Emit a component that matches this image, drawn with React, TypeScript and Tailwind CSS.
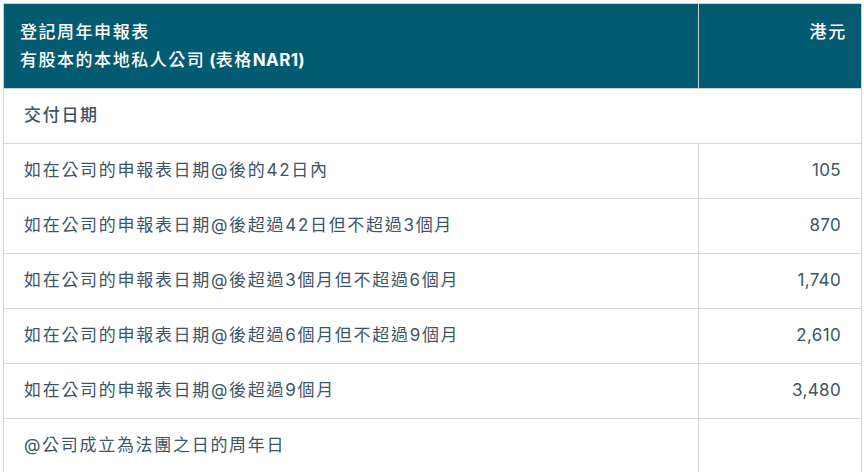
// Annual return fee table (NAR1)
const rows = [
    { label: '如在公司的申報表日期@後的42日內', fee: '105' },
    { label: '如在公司的申報表日期@後超過42日但不超過3個月', fee: '870' },
    { label: '如在公司的申報表日期@後超過3個月但不超過6個月', fee: '1,740' },
    { label: '如在公司的申報表日期@後超過6個月但不超過9個月', fee: '2,610' },
    { label: '如在公司的申報表日期@後超過9個月', fee: '3,480' },
];

const font = { fontFamily: 'Inter, "Noto Sans CJK TC", sans-serif' };

export default function App() {
    return (
        <div className="bg-white px-[3px] pt-[3px]" style={font}>
            <table className="w-[858px] table-fixed border-collapse text-[17px] tracking-[0.1em] text-[#3d5566]">
                <colgroup>
                    <col className="w-[695px]" />
                    <col className="w-[163px]" />
                </colgroup>
                <thead>
                    <tr className="bg-[#025b71] text-white">
                        <th className="h-[84px] border border-[#c9cfd2] py-3.5 pl-[16px] pr-4 text-left align-top text-[17px] font-medium leading-7 tracking-[0.09em]">
                            登記周年申報表
                            <br />
                            有股本的本地私人公司<span className="ml-1 font-bold tracking-normal">(</span>表格
                            <span className="font-bold tracking-[0.02em]">NAR1)</span>
                        </th>
                        <th className="border border-[#c9cfd2] border-l-[#9aa5aa] py-3.5 pl-4 pr-[14px] text-right align-top text-[17px] font-medium leading-7">
                            港元
                        </th>
                    </tr>
                </thead>
                <tbody>
                    <tr>
                        <td colSpan={2} className="h-[55px] border border-[#d6d6d6] px-5 font-medium">
                            交付日期
                        </td>
                    </tr>
                    {rows.map((row) => (
                        <tr key={row.fee}>
                            <td className="h-[55px] border border-[#d6d6d6] px-5">{row.label}</td>
                            <td className="border border-[#d6d6d6] px-5 text-right tracking-[0.02em]">{row.fee}</td>
                        </tr>
                    ))}
                    <tr>
                        <td className="h-[55px] border border-[#d6d6d6] px-5">@公司成立為法團之日的周年日</td>
                        <td className="border border-[#d6d6d6] px-5" />
                    </tr>
                </tbody>
            </table>
        </div>
    );
}
